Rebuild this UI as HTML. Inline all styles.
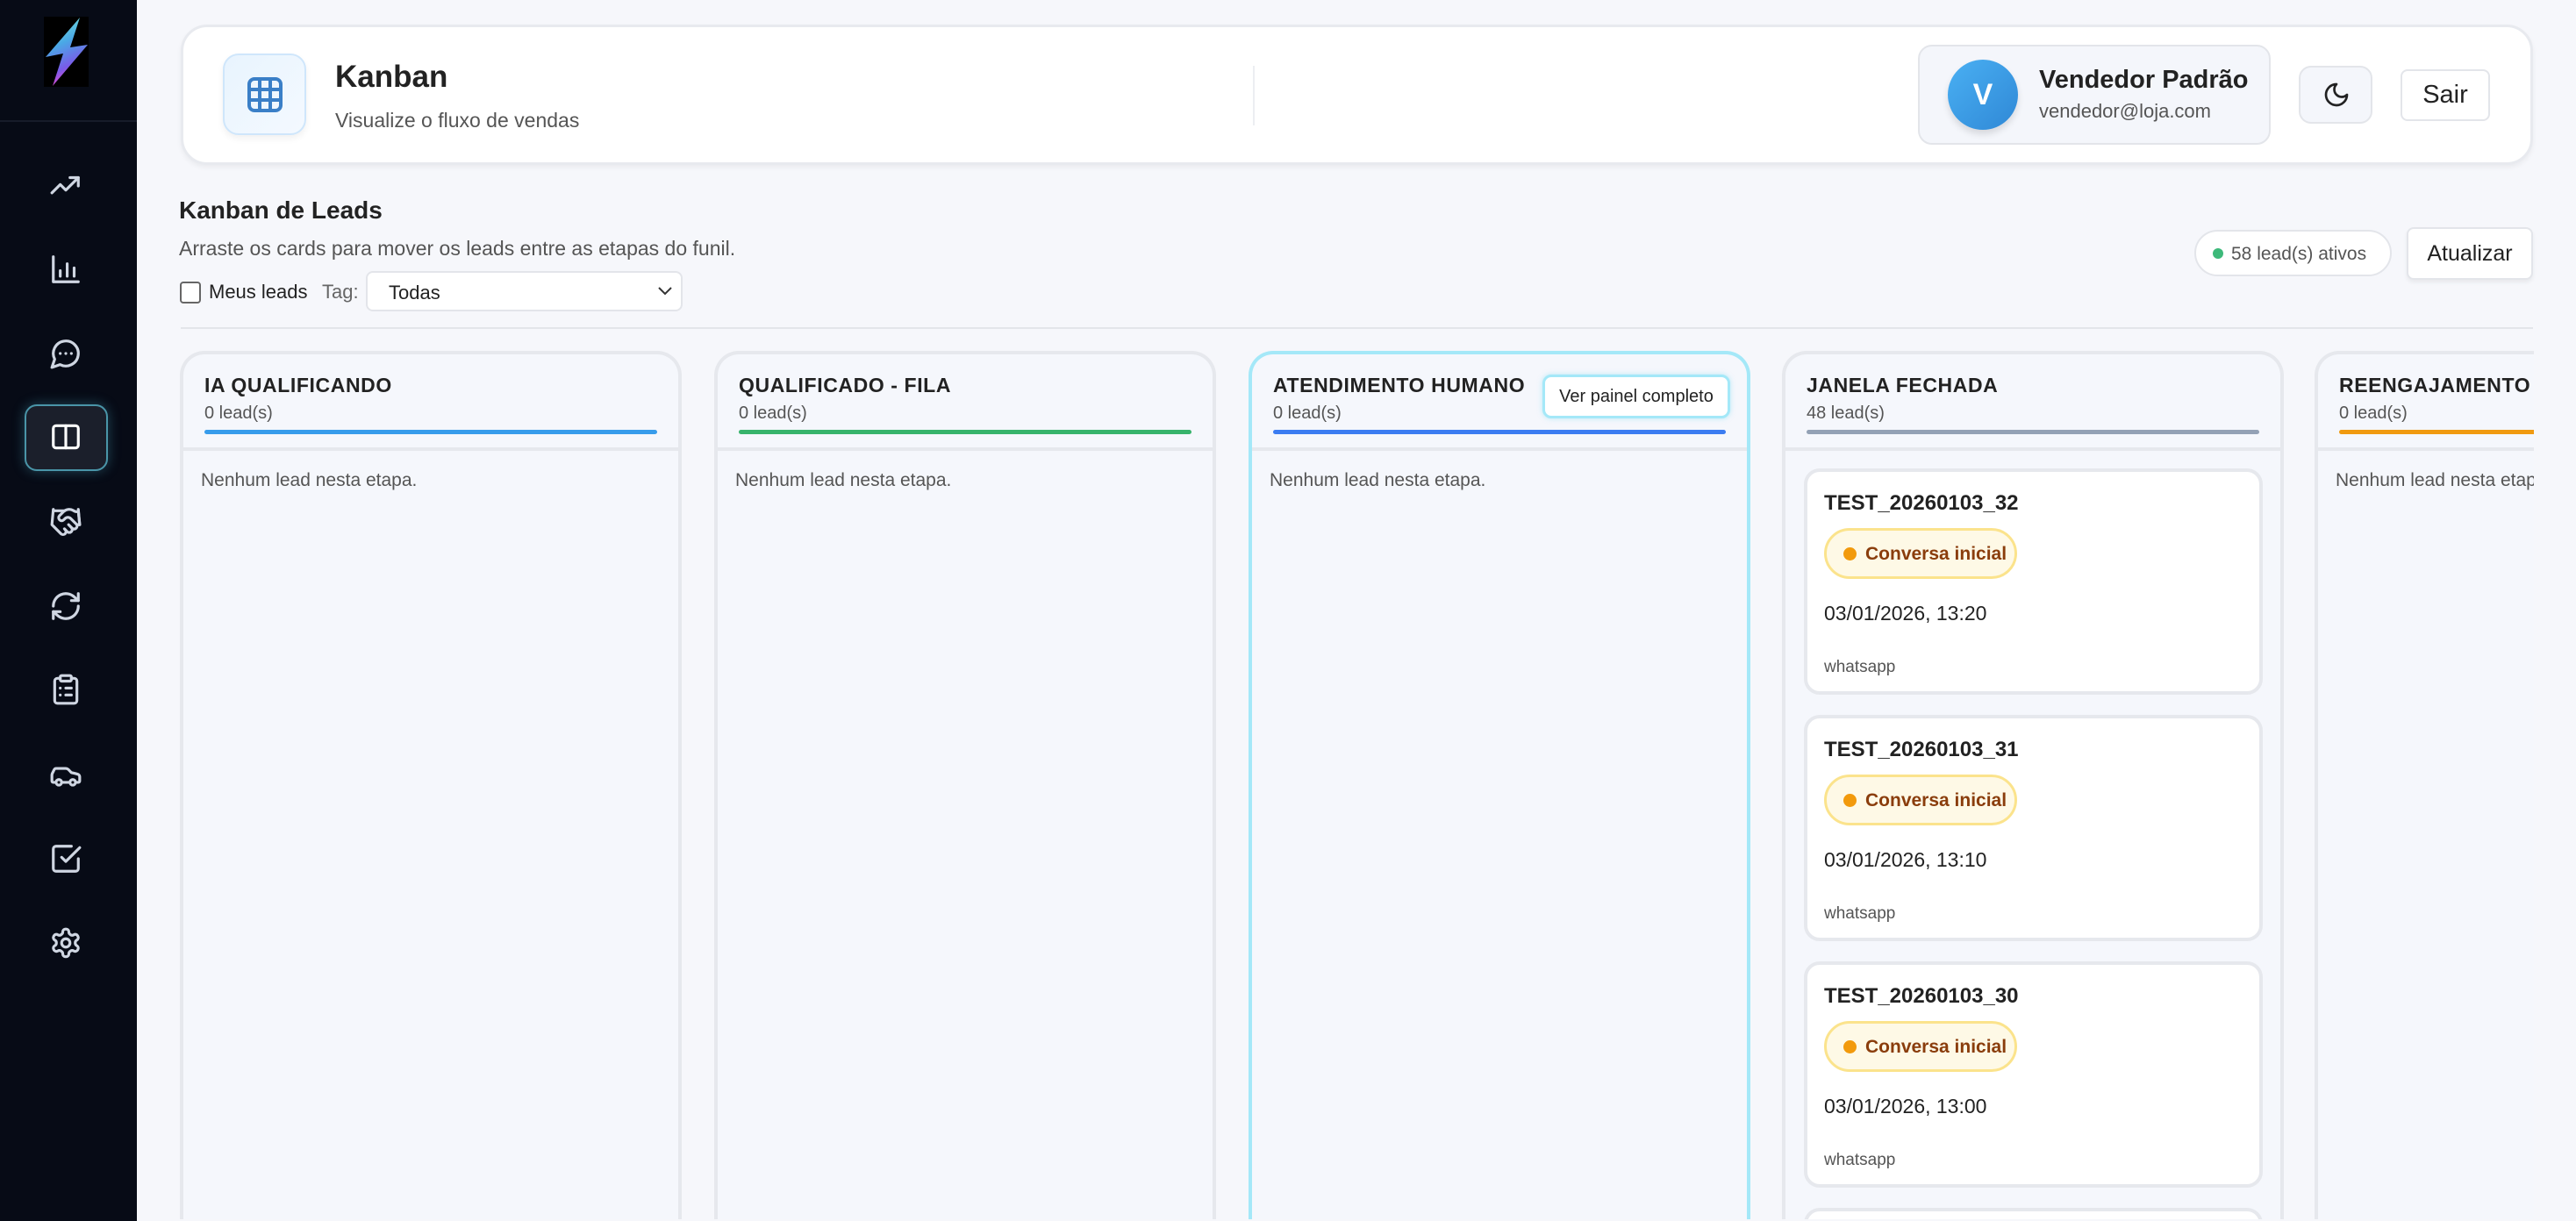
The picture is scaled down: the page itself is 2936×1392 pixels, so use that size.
<!DOCTYPE html>
<html><head><meta charset="utf-8"><style>
*{box-sizing:border-box;margin:0;padding:0}
html,body{width:2936px;height:1392px;overflow:hidden}
body{background:#f6f7fb;font-family:"Liberation Sans",Arial,sans-serif;color:#222;position:relative}
.abs{position:absolute}
#sb{left:0;top:0;width:156px;height:1392px;background:#070b16}
.nav{position:absolute;left:56px;width:38px;height:38px}
.nav svg{width:38px;height:38px;fill:none;stroke:#cfd6e2;stroke-width:2;stroke-linecap:round;stroke-linejoin:round}
.col{position:absolute;top:400px;width:572px;height:990px;background:#f5f7fc;border:4px solid #e6e8ed;border-bottom:none;border-radius:28px 28px 0 0;overflow:hidden}
.col .t{position:absolute;left:24px;top:22px;font-weight:bold;font-size:23px;letter-spacing:0.6px;color:#222;white-space:nowrap}
.col .c{position:absolute;left:24px;top:56px;font-size:20px;color:#555}
.col .bar{position:absolute;left:24px;right:24px;top:86px;height:5px;border-radius:3px}
.col .hl{position:absolute;left:0;right:0;top:106px;height:4px;background:#e6e8ed}
.col .e{position:absolute;left:20px;top:132px;font-size:21px;color:#555;white-space:nowrap}
.card{position:absolute;left:21px;width:523px;height:258px;background:#fff;border:4px solid #e6e8ed;border-radius:18px}
.card .n{position:absolute;left:19px;top:22px;font-weight:bold;font-size:24px;color:#222}
.card .p{position:absolute;left:19px;top:64px;width:220px;height:58px;background:#fef9e6;border:3px solid #fbe38c;border-radius:29px;font-weight:bold;font-size:21px;color:#8a3d0c;padding:15px 0 0 44px}
.card .p:before{content:"";position:absolute;left:19px;top:19px;width:15px;height:15px;border-radius:50%;background:#f29a0c}
.card .d{position:absolute;left:19px;top:148px;font-size:23px;color:#222}
.card .w{position:absolute;left:19px;top:212px;font-size:19px;color:#555}
</style></head><body>
<div id="sb" class="abs">
<svg class="abs" style="left:50px;top:19px" width="51" height="80" viewBox="0 0 51 80"><rect width="51" height="80" fill="#000"/><defs><linearGradient id="g" x1="0" y1="0" x2="0.3" y2="1"><stop offset="0" stop-color="#7ff0d6"/><stop offset=".45" stop-color="#4aa8e6"/><stop offset=".8" stop-color="#7a5be8"/><stop offset="1" stop-color="#e04ad0"/></linearGradient></defs><path d="M41 1 L2 46 L22 42 L10 79 L50 32 L30 35 Z" fill="url(#g)"/></svg>
<div class="abs" style="left:0;top:137px;width:156px;height:2px;background:#171c2a"></div>
<div class="nav" style="top:193px"><svg viewBox="0 0 24 24"><path d="M2 17l6-6 4 4 9-9"/><path d="M15 6h6v6"/></svg></div>
<div class="nav" style="top:288px"><svg viewBox="0 0 24 24"><path d="M3 3v18h18"/><path d="M8 17v-4M13 17V8M18 17v-6"/></svg></div>
<div class="nav" style="top:384px"><svg viewBox="0 0 24 24"><path d="M7.9 20A9 9 0 1 0 4 16.1L2 22z"/><path d="M8 12h.01M12 12h.01M16 12h.01"/></svg></div>
<div class="abs" style="left:28px;top:461px;width:95px;height:76px;border:2px solid #4a95a8;border-radius:14px;background:#1b1f2b;box-shadow:0 0 14px rgba(80,180,210,.35)"></div>
<div class="nav" style="top:479px"><svg viewBox="0 0 24 24" style="stroke:#fff"><rect x="3" y="4" width="18" height="16" rx="2"/><path d="M12 4v16"/></svg></div>
<div class="nav" style="top:576px"><svg viewBox="0 0 24 24"><path d="M11 17l2 2a1 1 0 1 0 3-3"/><path d="M14 14l2.5 2.5a1 1 0 1 0 3-3l-3.9-3.9a3 3 0 0 0-4.2 0l-.9.9a1 1 0 1 1-3-3l2.8-2.8a5.8 5.8 0 0 1 7.1-.9l.5.3a4 4 0 0 0 2.8.5L21 4l1 10h-2"/><path d="M21 3l1 11h-2M3 3L2 14l6.5 6.5a1 1 0 1 0 3-3M3 4h8"/></svg></div>
<div class="nav" style="top:672px"><svg viewBox="0 0 24 24"><path d="M3 12a9 9 0 0 1 15-6.7L21 8"/><path d="M21 3v5h-5"/><path d="M21 12a9 9 0 0 1-15 6.7L3 16"/><path d="M8 16H3v5"/></svg></div>
<div class="nav" style="top:767px"><svg viewBox="0 0 24 24"><rect x="8" y="2" width="8" height="4" rx="1"/><path d="M16 4h2a2 2 0 0 1 2 2v14a2 2 0 0 1-2 2H6a2 2 0 0 1-2-2V6a2 2 0 0 1 2-2h2"/><path d="M12 11h4M12 16h4M8 11h.01M8 16h.01"/></svg></div>
<div class="nav" style="top:865px"><svg viewBox="0 0 24 24"><path d="M19 17h2c.6 0 1-.4 1-1v-3c0-.9-.7-1.7-1.5-1.9C18.7 10.6 16 10 16 10s-1.3-1.4-2.2-2.3c-.5-.4-1.1-.7-1.8-.7H5c-.6 0-1.1.4-1.4.9l-1.4 2.9A3.7 3.7 0 0 0 2 12v4c0 .6.4 1 1 1h2"/><circle cx="7" cy="17" r="2"/><path d="M9 17h6"/><circle cx="17" cy="17" r="2"/></svg></div>
<div class="nav" style="top:960px"><svg viewBox="0 0 24 24"><path d="M9 11l3 3L22 4"/><path d="M21 12v7a2 2 0 0 1-2 2H5a2 2 0 0 1-2-2V5a2 2 0 0 1 2-2h11"/></svg></div>
<div class="nav" style="top:1056px"><svg viewBox="0 0 24 24"><path d="M12.2 2h-.4a2 2 0 0 0-2 2v.2a2 2 0 0 1-1 1.7l-.4.3a2 2 0 0 1-2 0l-.2-.1a2 2 0 0 0-2.7.7l-.2.4a2 2 0 0 0 .7 2.7l.2.1a2 2 0 0 1 1 1.7v.5a2 2 0 0 1-1 1.7l-.2.1a2 2 0 0 0-.7 2.7l.2.4a2 2 0 0 0 2.7.7l.2-.1a2 2 0 0 1 2 0l.4.3a2 2 0 0 1 1 1.7v.2a2 2 0 0 0 2 2h.4a2 2 0 0 0 2-2v-.2a2 2 0 0 1 1-1.7l.4-.3a2 2 0 0 1 2 0l.2.1a2 2 0 0 0 2.7-.7l.2-.4a2 2 0 0 0-.7-2.7l-.2-.1a2 2 0 0 1-1-1.7v-.5a2 2 0 0 1 1-1.7l.2-.1a2 2 0 0 0 .7-2.7l-.2-.4a2 2 0 0 0-2.7-.7l-.2.1a2 2 0 0 1-2 0l-.4-.3a2 2 0 0 1-1-1.7V4a2 2 0 0 0-2-2z"/><circle cx="12" cy="12" r="3"/></svg></div>
</div>

<div class="abs" style="left:206px;top:28px;width:2681px;height:160px;background:#fff;border:3px solid #e8eaef;border-radius:30px;box-shadow:0 3px 6px rgba(0,0,0,.05)"></div>
<div class="abs" style="left:254px;top:61px;width:95px;height:93px;border:2px solid #cfe6fb;border-radius:18px;background:linear-gradient(135deg,#e8f4fe,#f4f9ff);box-shadow:0 4px 8px rgba(0,0,0,.06)"></div>
<svg class="abs" style="left:282px;top:88px" width="40" height="40" viewBox="0 0 40 40" fill="none" stroke="#3a7fc7" stroke-width="4"><rect x="2" y="2" width="36" height="36" rx="6"/><path d="M14 2v36M26 2v36M2 14h36M2 26h36"/></svg>
<div class="abs" style="left:382px;top:68px;font-size:35px;font-weight:bold;color:#222">Kanban</div>
<div class="abs" style="left:382px;top:124px;font-size:23px;color:#555">Visualize o fluxo de vendas</div>
<div class="abs" style="left:1428px;top:75px;width:2px;height:68px;background:#eceef2"></div>
<div class="abs" style="left:2186px;top:51px;width:402px;height:114px;background:#f4f6fb;border:2px solid #e3e5ea;border-radius:16px"></div>
<div class="abs" style="left:2220px;top:68px;width:80px;height:80px;border-radius:50%;background:linear-gradient(135deg,#4ab0f3,#2f88d6);color:#fff;font-weight:bold;font-size:34px;text-align:center;line-height:80px;box-shadow:0 5px 8px rgba(0,0,0,.12)">V</div>
<div class="abs" style="left:2324px;top:75px;font-size:29px;font-weight:bold;color:#222">Vendedor Padrão</div>
<div class="abs" style="left:2324px;top:114px;font-size:22px;color:#555">vendedor@loja.com</div>
<div class="abs" style="left:2620px;top:75px;width:84px;height:66px;background:#f4f6fb;border:2px solid #e3e5ea;border-radius:14px"></div>
<svg class="abs" style="left:2647px;top:92px" width="32" height="32" viewBox="0 0 24 24" fill="none" stroke="#222" stroke-width="2" stroke-linecap="round" stroke-linejoin="round"><path d="M12 3a6 6 0 0 0 9 9 9 9 0 1 1-9-9z"/></svg>
<div class="abs" style="left:2736px;top:79px;width:102px;height:59px;background:#fff;border:2px solid #e3e5ea;border-radius:8px;font-size:29px;text-align:center;line-height:55px;color:#222">Sair</div>

<div class="abs" style="left:204px;top:224px;font-size:28px;font-weight:bold;color:#222">Kanban de Leads</div>
<div class="abs" style="left:204px;top:270px;font-size:23px;color:#555">Arraste os cards para mover os leads entre as etapas do funil.</div>
<div class="abs" style="left:205px;top:321px;width:24px;height:25px;border:2px solid #666;border-radius:4px;background:#fff"></div>
<div class="abs" style="left:238px;top:320px;font-size:22px;color:#222">Meus leads</div>
<div class="abs" style="left:367px;top:320px;font-size:22px;color:#666">Tag:</div>
<div class="abs" style="left:417px;top:309px;width:361px;height:46px;background:#fff;border:2px solid #e3e5ea;border-radius:8px;font-size:22px;color:#222;padding:10px 0 0 24px">Todas</div>
<svg class="abs" style="left:748px;top:322px" width="20" height="20" viewBox="0 0 20 20" fill="none" stroke="#333" stroke-width="2"><path d="M3 6l7 7 7-7"/></svg>
<div class="abs" style="left:2501px;top:262px;width:225px;height:53px;background:#fff;border:2px solid #e3e5ea;border-radius:27px;font-size:21px;color:#555;padding:14px 0 0 40px">58 lead(s) ativos</div>
<div class="abs" style="left:2522px;top:283px;width:12px;height:12px;border-radius:50%;background:#3db97a"></div>
<div class="abs" style="left:2743px;top:259px;width:144px;height:60px;background:#fff;border:2px solid #e3e5ea;border-radius:8px;font-size:25px;color:#222;text-align:center;line-height:56px;box-shadow:0 3px 5px rgba(0,0,0,.06)">Atualizar</div>
<div class="abs" style="left:206px;top:373px;width:2681px;height:2px;background:#e3e5ea"></div>

<div class="abs" style="left:0;top:0;width:2888px;height:1392px;overflow:hidden">
<div class="col" style="left:205px"><div class="t">IA QUALIFICANDO</div><div class="c">0 lead(s)</div><div class="bar" style="background:#379ceb"></div><div class="hl"></div><div class="e">Nenhum lead nesta etapa.</div></div>
<div class="col" style="left:814px"><div class="t">QUALIFICADO - FILA</div><div class="c">0 lead(s)</div><div class="bar" style="background:#37b36b"></div><div class="hl"></div><div class="e">Nenhum lead nesta etapa.</div></div>
<div class="col" style="left:1423px;border-color:#a4e8f8"><div class="t">ATENDIMENTO HUMANO</div><div class="c">0 lead(s)</div><div class="bar" style="background:#3b7cf1"></div><div class="hl"></div><div class="e">Nenhum lead nesta etapa.</div>
<div style="position:absolute;left:331px;top:23px;width:214px;height:50px;background:#fff;border:3px solid #a4e8f8;border-radius:10px;font-size:20px;color:#222;text-align:center;line-height:44px;box-shadow:0 0 6px rgba(120,220,245,.5)">Ver painel completo</div></div>
<div class="col" style="left:2031px"><div class="t">JANELA FECHADA</div><div class="c">48 lead(s)</div><div class="bar" style="background:#93a1b5"></div><div class="hl"></div>
<div class="card" style="top:130px"><div class="n">TEST_20260103_32</div><div class="p">Conversa inicial</div><div class="d">03/01/2026, 13:20</div><div class="w">whatsapp</div></div>
<div class="card" style="top:411px"><div class="n">TEST_20260103_31</div><div class="p">Conversa inicial</div><div class="d">03/01/2026, 13:10</div><div class="w">whatsapp</div></div>
<div class="card" style="top:692px"><div class="n">TEST_20260103_30</div><div class="p">Conversa inicial</div><div class="d">03/01/2026, 13:00</div><div class="w">whatsapp</div></div>
<div class="card" style="top:973px"></div>
</div>
<div class="col" style="left:2638px"><div class="t">REENGAJAMENTO</div><div class="c">0 lead(s)</div><div class="bar" style="background:#f09a10;right:-30px"></div><div class="hl"></div><div class="e">Nenhum lead nesta etapa.</div></div>
</div>
</body></html>
